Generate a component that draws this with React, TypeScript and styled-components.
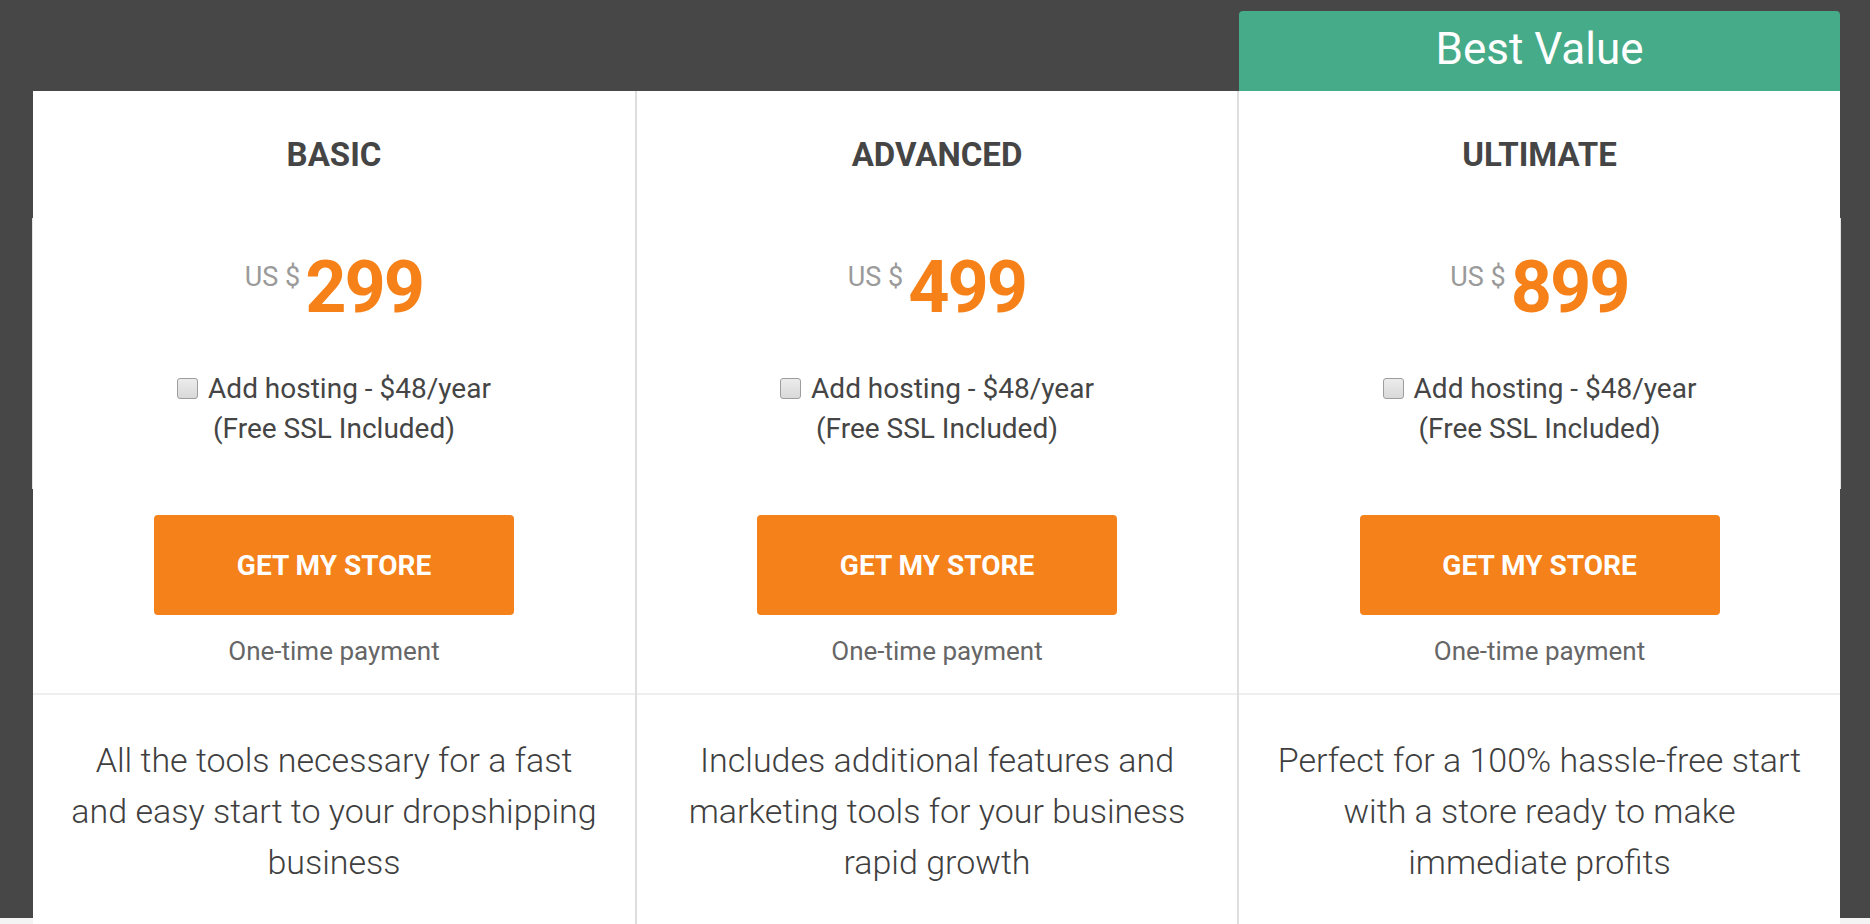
import React from "react";
import styled, { createGlobalStyle } from "styled-components";

const GlobalStyle = createGlobalStyle`
  html, body {
    margin: 0;
    padding: 0;
  }
  body {
    font-family: Roboto, "Liberation Sans", Arial, sans-serif;
    background: linear-gradient(#474747 0, #474747 918px, #f4f4f4 918px);
    overflow: hidden;
  }
`;

const Page = styled.div`
  padding: 11px 30px 0 33px;
  height: 913px;
  overflow: hidden;
`;

const Grid = styled.div`
  display: grid;
  grid-template-columns: 602px 602px 603px;
  width: 1807px;
`;

const TabSlot = styled.div<{ $first?: boolean }>`
  height: 80px;
  display: flex;
  padding-left: ${(p) => (p.$first ? "0" : "2px")};
`;

const Tab = styled.div`
  flex: 1;
  background: #46ab88;
  border-radius: 4px 4px 0 0;
  color: #fff;
  font-size: 44px;
  line-height: 76px;
  text-align: center;
  font-weight: 400;
`;

const Column = styled.div<{ $first?: boolean }>`
  background: #fff;
  border-left: ${(p) => (p.$first ? "none" : "2px solid #dedede")};
  display: flex;
  flex-direction: column;
  align-items: stretch;
  text-align: center;
  height: 840px;
`;

const Title = styled.h2`
  margin: 0;
  padding-top: 46px;
  font-size: 33px;
  line-height: 36px;
  font-weight: 700;
  color: #454545;
`;

const Offer = styled.div<{ $edge?: "left" | "right" }>`
  margin-top: 45px;
  height: 271px;
  box-sizing: border-box;
  padding-top: 34px;
  margin-left: ${(p) => (p.$edge === "left" ? "-1px" : "0")};
  margin-right: ${(p) => (p.$edge === "right" ? "-1px" : "0")};
  border-left: ${(p) => (p.$edge === "left" ? "1px solid #e2e2e2" : "none")};
  border-right: ${(p) => (p.$edge === "right" ? "1px solid #e2e2e2" : "none")};
`;

const PriceRow = styled.div`
  display: flex;
  justify-content: center;
  align-items: flex-start;
  gap: 5px;
`;

const Currency = styled.span`
  font-size: 27px;
  line-height: 27px;
  margin-top: 12px;
  color: #9a9a9a;
`;

const Amount = styled.span`
  font-size: 72px;
  line-height: 72px;
  font-weight: 700;
  color: #f58118;
  letter-spacing: -2px;
`;

const Hosting = styled.label`
  display: block;
  margin-top: 45px;
  font-size: 28px;
  line-height: 40px;
  color: #454545;
`;

const Check = styled.input`
  appearance: none;
  width: 21px;
  height: 21px;
  margin: 0 10px 0 0;
  vertical-align: -1px;
  border: 1px solid #9d9d9d;
  border-radius: 3px;
  background: linear-gradient(#ececec, #d9d9d9);
  box-sizing: border-box;
`;

const BuyButton = styled.button`
  align-self: center;
  margin-top: 26px;
  width: 360px;
  height: 100px;
  border: none;
  border-radius: 4px;
  background: #f5811a;
  color: #fff;
  font-family: inherit;
  font-size: 28px;
  font-weight: 700;
  cursor: pointer;
`;

const Note = styled.div`
  margin-top: 21px;
  padding-bottom: 27px;
  font-size: 26px;
  line-height: 30px;
  color: #666;
  border-bottom: 2px solid #eeeeee;
`;

const Description = styled.p`
  margin: 0;
  padding: 40px 32px 0;
  font-size: 34px;
  line-height: 51px;
  font-weight: 300;
  color: #3f3f3f;
`;

type Plan = {
  name: string;
  price: string;
  text: string;
};

const plans: Plan[] = [
  {
    name: "BASIC",
    price: "299",
    text: "All the tools necessary for a fast and easy start to your dropshipping business",
  },
  {
    name: "ADVANCED",
    price: "499",
    text: "Includes additional features and marketing tools for your business rapid growth",
  },
  {
    name: "ULTIMATE",
    price: "899",
    text: "Perfect for a 100% hassle-free start with a store ready to make immediate profits",
  },
];

export default function App() {
  return (
    <>
      <GlobalStyle />
      <Page>
        <Grid>
          <TabSlot $first />
          <TabSlot />
          <TabSlot>
            <Tab>Best Value</Tab>
          </TabSlot>
          {plans.map((plan, i) => (
            <Column key={plan.name} $first={i === 0}>
              <Title>{plan.name}</Title>
              <Offer $edge={i === 0 ? "left" : i === 2 ? "right" : undefined}>
                <PriceRow>
                  <Currency>US $</Currency>
                  <Amount>{plan.price}</Amount>
                </PriceRow>
                <Hosting>
                  <Check type="checkbox" />
                  Add hosting - $48/year
                  <br />
                  (Free SSL Included)
                </Hosting>
              </Offer>
              <BuyButton>GET MY STORE</BuyButton>
              <Note>One-time payment</Note>
              <Description>{plan.text}</Description>
            </Column>
          ))}
        </Grid>
      </Page>
    </>
  );
}
